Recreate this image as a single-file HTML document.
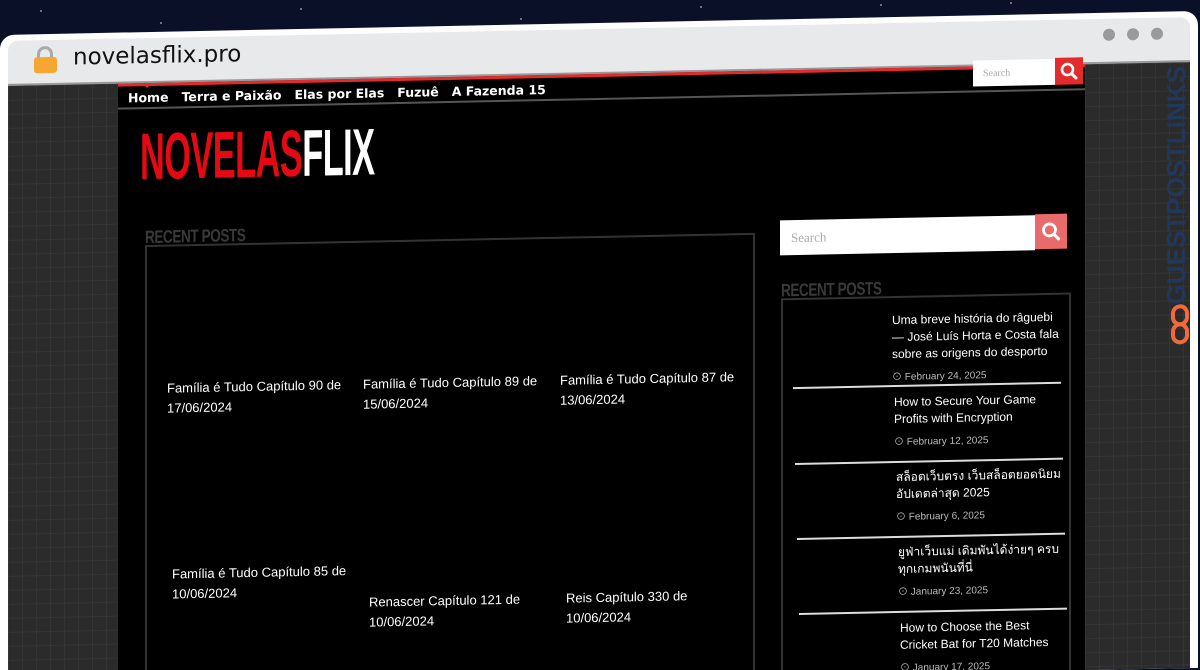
<!DOCTYPE html>
<html><head><meta charset="utf-8"><style>
*{margin:0;padding:0;box-sizing:border-box}
html,body{width:1200px;height:670px;overflow:hidden}
body{background:#0b1029;font-family:"Liberation Sans",sans-serif;position:relative}
.star{position:absolute;width:2px;height:2px;background:#8890b0;border-radius:50%}
#w{position:absolute;left:0;top:0;width:1200px;height:692px;overflow:hidden;transform-origin:0 35px;transform:skewY(-1.15deg)}
.a{position:absolute}
.pat{background-color:#2b2b2b;background-image:linear-gradient(rgba(255,255,255,.04) 1px,transparent 1px),linear-gradient(90deg,rgba(255,255,255,.04) 1px,transparent 1px);background-size:14px 14px}
.nav a{color:#fff;font-weight:bold;font-size:12.5px;font-family:"DejaVu Sans",sans-serif;margin-right:13px;text-decoration:none}
.pt{color:#fff;font-family:"Liberation Sans",sans-serif;font-size:13px;line-height:20px;width:190px}
.st{color:#fff;font-family:"Liberation Sans","Noto Sans CJK SC",sans-serif;font-size:12px;line-height:17px;width:172px}
.dt{color:#bbb;font-size:10px;margin-top:6px}
.hr{position:absolute;height:2px;background:#ddd;left:793px;width:268px}
.h{color:#3a3a3a;font-family:"Liberation Sans Narrow","Liberation Sans",sans-serif;font-weight:bold;font-size:18px;transform:scaleX(.75);transform-origin:0 0;letter-spacing:-.5px}
</style></head><body>
<div class="star" style="left:40px;top:10px"></div><div class="star" style="left:160px;top:22px"></div><div class="star" style="left:300px;top:8px"></div><div class="star" style="left:520px;top:18px"></div><div class="star" style="left:700px;top:6px"></div><div class="star" style="left:880px;top:4px"></div><div class="star" style="left:1010px;top:2px"></div>
<div id="w">
 <div class="a" style="left:0;top:35px;width:1198px;height:700px;background:#fff;border-radius:14px 14px 0 0"></div>
 <div class="a" style="left:8px;top:41px;width:1182px;height:45px;background:#e8e9eb;border-radius:10px 10px 0 0"></div>
 <div class="a" style="left:37px;top:47px;width:16px;height:14px;border:3px solid #aaa;border-bottom:none;border-radius:8px 8px 0 0"></div>
 <div class="a" style="left:34px;top:58px;width:23px;height:16px;background:#f7a731;border-radius:3px"></div>
 <div class="a" style="left:73px;top:46px;font-size:23px;color:#111;font-family:'DejaVu Sans',sans-serif">novelasflix.pro</div>
 <div class="a" style="left:1103px;top:51px;width:12px;height:12px;border-radius:50%;background:#9a9a9a"></div>
 <div class="a" style="left:1127px;top:51px;width:12px;height:12px;border-radius:50%;background:#9a9a9a"></div>
 <div class="a" style="left:1151px;top:51px;width:12px;height:12px;border-radius:50%;background:#9a9a9a"></div>
 <div class="a" style="left:8px;top:84px;width:1182px;height:2px;background:#999"></div>
 <div class="a pat" style="left:8px;top:86px;width:110px;height:650px"></div>
 <div class="a pat" style="left:1085px;top:86px;width:105px;height:650px"></div>
 <div class="a" style="left:1160px;top:78px;width:32px;height:250px;color:#22385a;font-weight:bold;font-size:26px;line-height:32px;writing-mode:vertical-rl;transform:rotate(180deg);text-align:left;white-space:nowrap;overflow:hidden">GUESTPOSTLINKS</div>
 <div class="a" style="left:1171px;top:328px;width:18px;height:22px;border:4px solid #f26a3a;border-radius:9px"></div>
 <div class="a" style="left:1171px;top:346px;width:18px;height:22px;border:4px solid #f26a3a;border-radius:9px"></div>
 <div class="a" style="left:118px;top:86px;width:967px;height:650px;background:#000"></div>
 <div class="a" style="left:118px;top:86px;width:967px;height:3px;background:#e32b2b"></div>
 <div class="a" style="left:118px;top:110px;width:967px;height:2px;background:#555"></div>
 <div class="a nav" style="left:128px;top:92px;white-space:nowrap"><a>Home</a><a>Terra e Paixão</a><a>Elas por Elas</a><a>Fuzuê</a><a>A Fazenda 15</a></div>
 <div class="a" style="left:143px;top:87px;width:0;height:0;border:4px solid transparent;border-top-color:#e32b2b"></div>
 <div class="a" style="left:973px;top:80px;width:82px;height:26px;background:#fff;font-family:'Liberation Serif',serif;font-size:10px;color:#aaa;padding:8px 10px">Search</div>
 <div class="a" style="left:1055px;top:79px;width:28px;height:27px;background:#e32b2b"><svg width="28" height="27" viewBox="0 0 28 27"><circle cx="12.5" cy="12" r="5.5" fill="none" stroke="#fff" stroke-width="2.6"/><path d="M16.5 16l4.5 4.5" stroke="#fff" stroke-width="3" stroke-linecap="round"/></svg></div>
 <div class="a" style="left:140px;top:126px;font-family:'Liberation Sans Narrow','Liberation Sans',sans-serif;font-weight:bold;font-size:66px;line-height:66px;transform:scaleX(.52);transform-origin:0 0;letter-spacing:-1px;white-space:nowrap"><span style="color:#e50914">NOVELAS</span><span style="color:#fff">FLIX</span></div>
 <div class="a h" style="left:145px;top:230px">RECENT POSTS</div>
 <div class="a" style="left:145px;top:248px;width:610px;height:460px;border:2px solid #333"></div>
 <div class="a pt" style="left:167px;top:382px">Família é Tudo Capítulo 90 de 17/06/2024</div>
 <div class="a pt" style="left:363px;top:382px">Família é Tudo Capítulo 89 de 15/06/2024</div>
 <div class="a pt" style="left:560px;top:382px">Família é Tudo Capítulo 87 de 13/06/2024</div>
 <div class="a pt" style="left:172px;top:568px">Família é Tudo Capítulo 85 de 10/06/2024</div>
 <div class="a pt" style="left:369px;top:600px">Renascer Capítulo 121 de 10/06/2024</div>
 <div class="a pt" style="left:566px;top:600px">Reis Capítulo 330 de 10/06/2024</div>
 <div class="a" style="left:780px;top:236px;width:255px;height:35px;background:#fff;font-family:'Liberation Serif',serif;font-size:13px;color:#aaa;padding:10px 11px">Search</div>
 <div class="a" style="left:1035px;top:235px;width:32px;height:35px;background:#e86a6a"><svg width="32" height="35" viewBox="0 0 32 35"><circle cx="14.5" cy="16" r="6" fill="none" stroke="#fff" stroke-width="2.8"/><path d="M19 20.5l4.5 4.5" stroke="#fff" stroke-width="3.2" stroke-linecap="round"/></svg></div>
 <div class="a h" style="left:781px;top:296px">RECENT POSTS</div>
 <div class="a" style="left:781px;top:314px;width:290px;height:420px;border:2px solid #333"></div>
 <div class="a st" style="left:892px;top:330px">Uma breve história do râguebi — José Luís Horta e Costa fala sobre as origens do desporto<div class="dt">⊙ February 24, 2025</div></div>
 <div class="hr" style="top:403px"></div>
 <div class="a st" style="left:894px;top:412px">How to Secure Your Game Profits with Encryption<div class="dt">⊙ February 12, 2025</div></div>
 <div class="hr" style="top:479px;left:795px"></div>
 <div class="a st" style="left:896px;top:487px">สล็อตเว็บตรง เว็บสล็อตยอดนิยม อัปเดตล่าสุด 2025<div class="dt">⊙ February 6, 2025</div></div>
 <div class="hr" style="top:554px;left:797px"></div>
 <div class="a st" style="left:898px;top:562px">ยูฟ่าเว็บแม่ เดิมพันได้ง่ายๆ ครบทุกเกมพนันที่นี่<div class="dt">⊙ January 23, 2025</div></div>
 <div class="hr" style="top:629px;left:799px"></div>
 <div class="a st" style="left:900px;top:638px;width:158px">How to Choose the Best Cricket Bat for T20 Matches<div class="dt">⊙ January 17, 2025</div></div>
</div>
</body></html>
